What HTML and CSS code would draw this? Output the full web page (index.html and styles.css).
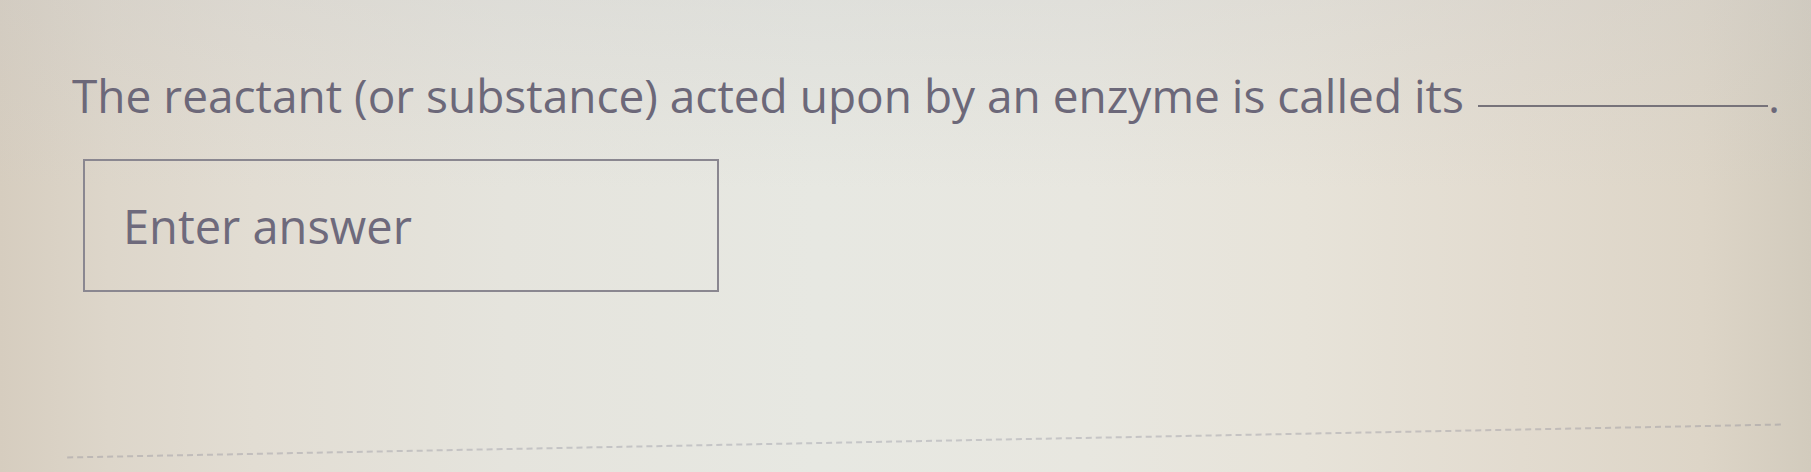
FILE: index.html
```html
<!DOCTYPE html>
<html lang="en">
<head>
    <meta charset="UTF-8">
    <meta name="viewport" content="width=device-width, initial-scale=1.0">
    <title>Question</title>
    <link rel="stylesheet" href="styles.css">
</head>
<body>
    <main class="question">
        <p class="prompt">The reactant (or substance) acted upon by an enzyme is called its <span class="blank"></span>.</p>
        <input type="text" class="answer" placeholder="Enter answer">
        <div class="divider"></div>
    </main>
</body>
</html>
```
FILE: styles.css
```css
html, body {
    height: 100%;
}

body {
    margin: 0;
    font-family: "Open Sans", "DejaVu Sans", sans-serif;
    color: #6c6879;
    background:
        linear-gradient(180deg, rgba(200, 200, 200, 0.25) 0%, rgba(255, 255, 255, 0) 40%),
        linear-gradient(90deg, #d6cdbf 0%, #ddd6ca 6%, #e2ddd3 14%, #e5e4dd 28%, #e7e8e2 45%, #e8e7e0 60%, #e7e3d9 72%, #e2dbcf 84%, #ddd5c7 94%, #d2cbbd 100%);
    overflow: hidden;
}

.question {
    padding: 64px 0 0 72px;
}

.prompt {
    margin: 0;
    font-size: 46px;
    white-space: nowrap;
}

.blank {
    display: inline-block;
    width: 290px;
    border-bottom: 2px solid #77737a;
    margin-left: 2px;
    vertical-align: 6px;
}

.answer {
    display: block;
    box-sizing: border-box;
    width: 636px;
    height: 133px;
    margin: 33px 0 0 11px;
    padding: 0 0 0 38px;
    border: 2px solid #8a8790;
    background: transparent;
    font: inherit;
    font-size: 47px;
    color: #6c6879;
}

.answer::placeholder {
    color: #6e6a7c;
}

.divider {
    margin: 148px 30px 0 -5px;
    border-top: 2px dashed rgba(120, 120, 140, 0.3);
    transform: rotate(-1.1deg);
}
```
